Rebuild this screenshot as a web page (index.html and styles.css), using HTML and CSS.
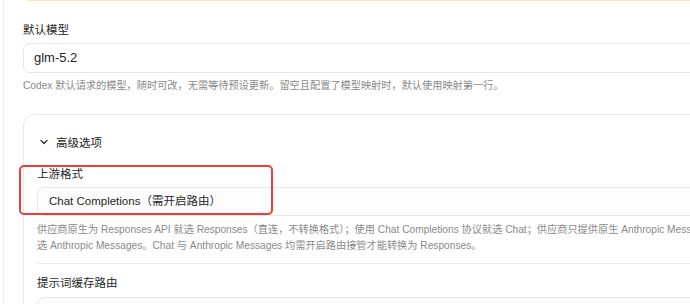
FILE: index.html
```html
<!DOCTYPE html>
<html lang="zh-CN">
<head>
<meta charset="utf-8">
<title>Codex 设置</title>
<link rel="stylesheet" href="styles.css">
</head>
<body>
<div class="panel">
  <div class="notice"></div>

  <div class="field">
    <div class="label">默认模型</div>
    <div class="input">glm-5.2</div>
    <div class="help">Codex 默认请求的模型，随时可改，无需等待预设更新。留空且配置了模型映射时，默认使用映射第一行。</div>
  </div>

  <div class="card">
    <div class="card-head">
      <svg class="chev" width="8" height="6" viewBox="0 0 8 6"><path d="M1 1.5 L4 4.5 L7 1.5" fill="none" stroke="#333" stroke-width="1.3" stroke-linecap="round" stroke-linejoin="round"/></svg>
      <span>高级选项</span>
    </div>

    <div class="field field-in highlight-wrap">
      <div class="label">上游格式</div>
      <div class="input select">Chat Completions（需开启路由）</div>
      <div class="highlight"></div>
    </div>
    <div class="help help-2">供应商原生为 Responses API 就选 Responses（直连，不转换格式）；使用 Chat Completions 协议就选 Chat；供应商只提供原生 Anthropic Messages 就<br>选 Anthropic Messages。Chat 与 Anthropic Messages 均需开启路由接管才能转换为 Responses。</div>

    <div class="divider"></div>

    <div class="field field-in field-last">
      <div class="label label-2">提示词缓存路由</div>
      <div class="input select"></div>
    </div>
  </div>
</div>
</body>
</html>
```
FILE: styles.css
```css
html, body {
  margin: 0;
  padding: 0;
  background: #ffffff;
  overflow: hidden;
  width: 690px;
  height: 304px;
}

body {
  font-family: "Liberation Sans", "Noto Sans CJK SC", sans-serif;
  color: #222222;
}

.panel {
  margin-left: 3px;
  border-left: 1px solid #ececec;
  padding-left: 19px;
  width: 1000px;
  height: 400px;
}

.notice {
  box-sizing: border-box;
  margin-top: -30px;
  height: 31px;
  background: #fffbeb;
  border: 1px solid #fbe7a6;
  border-radius: 6px;
}

.field {
  margin-top: 20px;
}

.label {
  font-size: 11.5px;
  line-height: 18px;
  color: #262626;
  margin-bottom: 4px;
}

.input {
  box-sizing: border-box;
  height: 30px;
  border: 1px solid #e6e6e6;
  border-radius: 7px;
  padding-left: 10px;
  font-size: 13px;
  line-height: 28px;
  color: #1f1f1f;
  background: #ffffff;
}

.help {
  margin-top: 5px;
  font-size: 10.2px;
  line-height: 16px;
  color: #8a8a8a;
  white-space: nowrap;
}

.card {
  margin-top: 20px;
  border: 1px solid #e8e8e8;
  border-radius: 12px;
  padding: 18px 0 0 13px;
  height: 300px;
}

.card-head {
  display: flex;
  align-items: center;
  gap: 8px;
  height: 18px;
  padding-left: 3px;
  font-size: 11.5px;
  color: #222222;
}

.chev {
  display: block;
}

.field-in {
  margin-top: 14px;
}

.highlight-wrap {
  position: relative;
}

.select {
  height: 29px;
  line-height: 27px;
  padding-left: 11px;
  font-size: 11.5px;
  background: #fdfdfd;
}

.highlight {
  position: absolute;
  left: -18px;
  top: 0;
  width: 254px;
  height: 50px;
  box-sizing: border-box;
  border: 2.5px solid #ee3e3a;
  border-radius: 5px;
}

.help-2 {
  margin-top: 6px;
}

.divider {
  margin-top: 9px;
  height: 1px;
  background: #ececec;
}

.label-2 {
  margin-bottom: 5px;
}

.field-last {
  margin-top: 10px;
}
```
